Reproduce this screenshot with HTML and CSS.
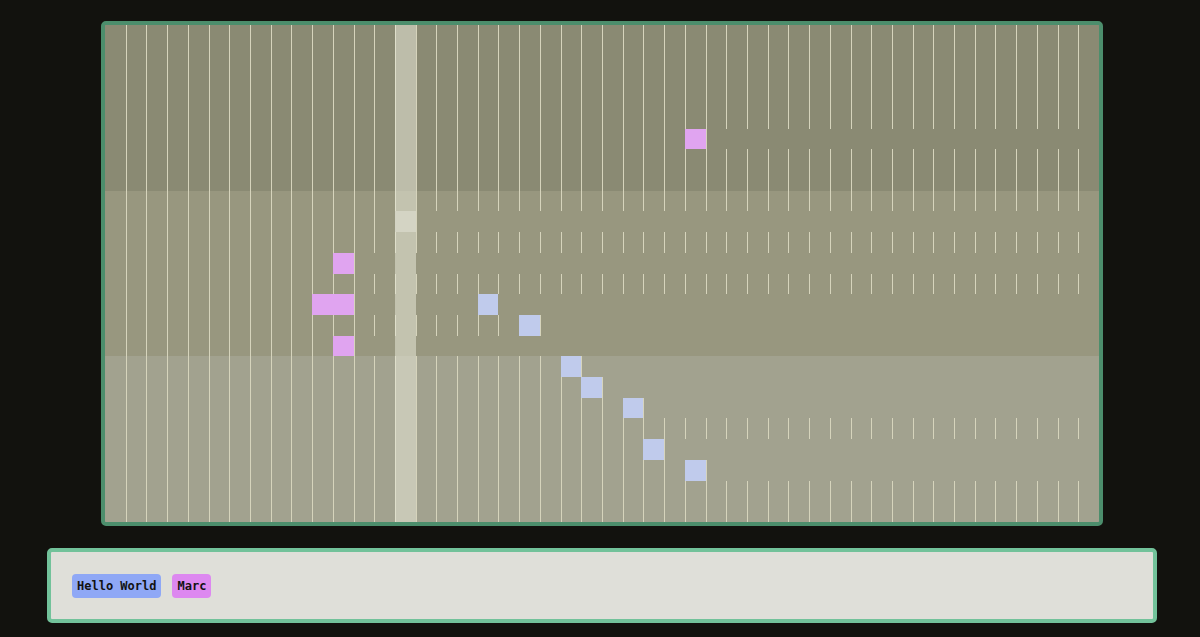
FILE: index.html
```html
<!DOCTYPE html>
<html lang="en">
<head>
<meta charset="utf-8">
<title>Piano roll</title>
<link rel="stylesheet" href="styles.css">
</head>
<body>
<main class="app">
  <section class="roll" id="roll">
    <div class="playhead"></div>
  </section>
  <section class="tray">
    <span class="chip chip-blue">Hello World</span>
    <span class="chip chip-pink">Marc</span>
  </section>
</main>
<script src="script.js"></script>
</body>
</html>
```

FILE: styles.css
```css
* { box-sizing: border-box; }
html, body { margin: 0; height: 100%; }
body {
  background: #12120e;
  font-family: "DejaVu Sans Mono", "Liberation Mono", monospace;
  overflow: hidden;
}
.app {
  width: 1110px;
  margin-left: 47px;
  padding-top: 21px;
  display: flex;
  flex-direction: column;
  gap: 22px;
}
.roll {
  position: relative;
  width: 1002px;
  height: 505px;
  margin: 0 auto;
  border: 4px solid #4c8e6c;
  border-radius: 5px;
  display: grid;
  grid-template-rows: repeat(24, 1fr);
  overflow: hidden;
  background: #8a8a73;
}
.row {
  display: grid;
  grid-template-columns: repeat(48, 1fr);
}
.band-1 { background: #8a8a73; }
.band-2 { background: #98977f; }
.band-3 { background: #a2a28f; }
.cell.lined { border-left: 1px solid #d6d4bc; }
.note-pink { background: #e0a4f0; }
.note-blue { background: #c0cbec; }
.note-playing { background: #d4d4c4; z-index: 2; }
.cell.lined.note-pink,
.cell.lined.note-blue,
.cell.lined.note-playing { border-left-color: transparent; }
.playhead {
  position: absolute;
  top: 0;
  bottom: 0;
  left: calc(100% * 14 / 48);
  width: calc(100% / 48);
  background: rgba(232, 232, 215, 0.55);
  z-index: 1;
}
.tray {
  height: 75px;
  border: 4px solid #72c29a;
  border-radius: 5px;
  background: #dfdfd9;
  display: flex;
  align-items: center;
  gap: 11px;
  padding: 0 21px;
}
.chip {
  font-weight: 700;
  font-size: 12px;
  line-height: 16px;
  padding: 4px 5px;
  border-radius: 4px;
  color: #121212;
}
.chip-blue { background: #8fa8f6; }
.chip-pink { background: #dd88f0; }
```

FILE: script.js
```js
(function () {
  var ROWS = 24, COLS = 48;
  var notes = [
    { row: 5, col: 28, len: 1, kind: "pink" },
    { row: 9, col: 14, len: 1, kind: "playing" },
    { row: 11, col: 11, len: 1, kind: "pink" },
    { row: 13, col: 10, len: 2, kind: "pink" },
    { row: 13, col: 18, len: 1, kind: "blue" },
    { row: 14, col: 20, len: 1, kind: "blue" },
    { row: 15, col: 11, len: 1, kind: "pink" },
    { row: 16, col: 22, len: 1, kind: "blue" },
    { row: 17, col: 23, len: 1, kind: "blue" },
    { row: 18, col: 25, len: 1, kind: "blue" },
    { row: 20, col: 26, len: 1, kind: "blue" },
    { row: 21, col: 28, len: 1, kind: "blue" }
  ];
  var roll = document.getElementById("roll");
  var playhead = roll.querySelector(".playhead");
  for (var r = 0; r < ROWS; r++) {
    var rowNotes = notes.filter(function (n) { return n.row === r; })
      .sort(function (a, b) { return a.col - b.col; });
    var lineEnd = rowNotes.length ? rowNotes[0].col + rowNotes[0].len : COLS - 1;
    var row = document.createElement("div");
    row.className = "row band-" + (Math.floor(r / 8) + 1);
    for (var c = 0; c < COLS; c++) {
      var cell = document.createElement("div");
      var cls = "cell";
      rowNotes.forEach(function (n) {
        if (c >= n.col && c < n.col + n.len) cls += " note-" + n.kind;
      });
      if (c >= 1 && c <= lineEnd) cls += " lined";
      cell.className = cls;
      row.appendChild(cell);
    }
    roll.insertBefore(row, playhead);
  }
})();
```
